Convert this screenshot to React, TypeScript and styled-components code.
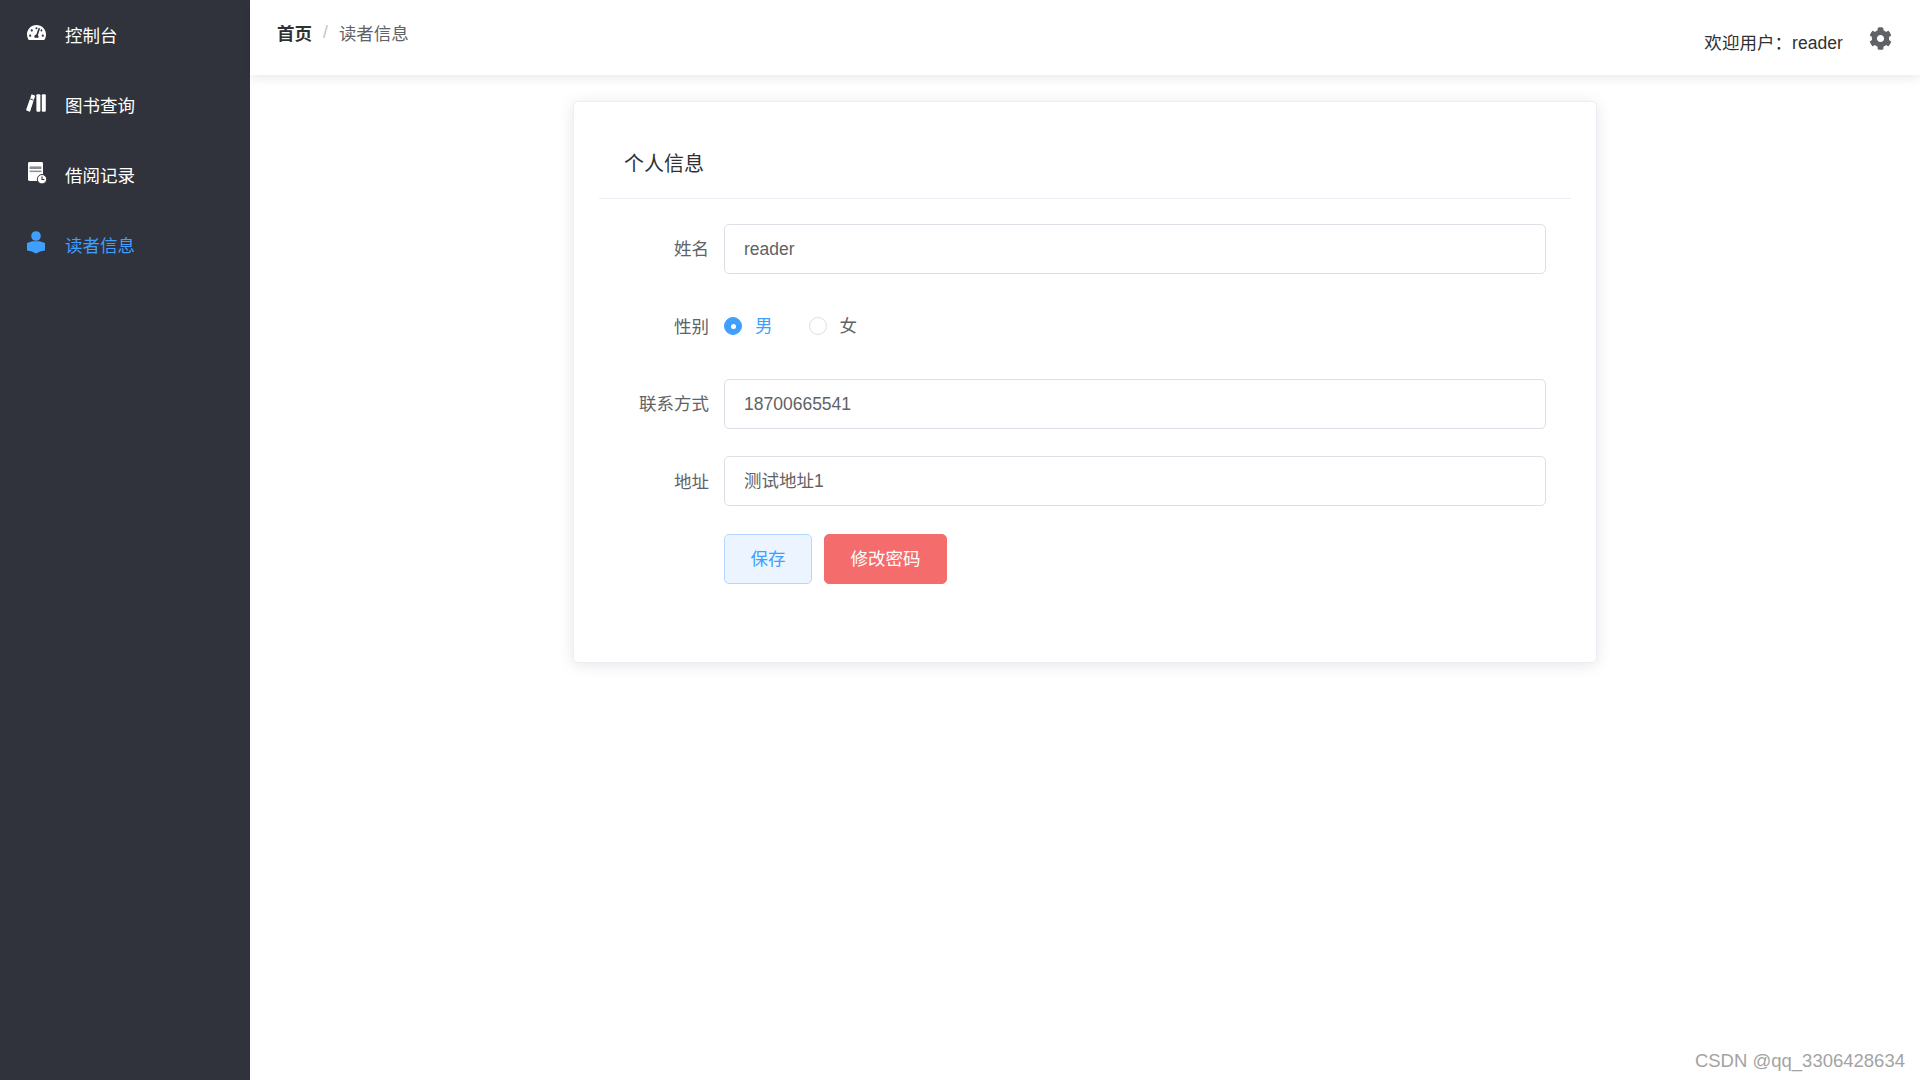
import styled, { createGlobalStyle } from "styled-components";
import { FaCog, FaTachometerAlt } from "react-icons/fa";

const GlobalStyle = createGlobalStyle`
  html, body {
    margin: 0;
    padding: 0;
    background: #fff;
    font-family: "Liberation Sans", "Noto Sans CJK SC", sans-serif;
  }
  * { box-sizing: border-box; }
`;

const Layout = styled.div`
  display: flex;
  width: 1920px;
  height: 1080px;
  overflow: hidden;
  position: relative;
`;

const Sidebar = styled.aside`
  width: 250px;
  flex-shrink: 0;
  background: #30333c;
`;

const MenuItem = styled.a<{ $active?: boolean }>`
  display: flex;
  align-items: center;
  height: 70px;
  padding-left: 25px;
  padding-bottom: 2px;
  font-size: 17.5px;
  color: ${(p) => (p.$active ? "#409eff" : "#fff")};
  text-decoration: none;
`;

const MenuIcon = styled.span`
  display: flex;
  width: 22px;
  height: 22px;
  margin-right: 18px;
  margin-top: -3px;
  align-items: center;
  justify-content: center;
  svg { display: block; }
`;

const Main = styled.div`
  flex: 1;
  display: flex;
  flex-direction: column;
  min-width: 0;
`;

const Header = styled.header`
  height: 75px;
  flex-shrink: 0;
  display: flex;
  justify-content: space-between;
  padding: 0 28px 0 27px;
  background: #fff;
  box-shadow: 0 2px 12px rgba(0, 0, 0, 0.1);
`;

const Breadcrumb = styled.nav`
  display: flex;
  align-items: center;
  height: 65px;
  font-size: 17.5px;
`;

const CrumbHome = styled.span`
  font-weight: 700;
  color: #303133;
`;

const CrumbSep = styled.span`
  margin: 0 11px;
  color: #c0c4cc;
`;

const CrumbCurrent = styled.span`
  color: #606266;
`;

const UserBox = styled.div`
  display: flex;
  align-items: center;
  font-size: 17.5px;
  color: #303133;
  height: 82px;
`;

const UserText = styled.span`
  letter-spacing: 0.05px;
`;

const Gear = styled.span`
  display: flex;
  margin-left: 26px;
  margin-top: -5px;
  color: #606266;
`;

const Content = styled.main`
  flex: 1;
  display: flex;
  justify-content: center;
  padding-top: 25.5px;
`;

const Card = styled.section`
  width: 1024px;
  height: 562px;
  padding: 0 25px;
  background: #fff;
  border: 1px solid #ebeef5;
  border-radius: 5px;
  box-shadow: 0 2px 15px rgba(0, 0, 0, 0.1);
`;

const CardHeader = styled.div`
  height: 97px;
  padding: 25px 25px 0;
  border-bottom: 1px solid #ebeef5;
`;

const CardTitle = styled.h2`
  margin: 0;
  padding-top: 25px;
  font-size: 20px;
  line-height: 25px;
  font-weight: 400;
  color: #303133;
`;

const Form = styled.form`
  display: flex;
  flex-direction: column;
  gap: 27.5px;
  padding: 25px;
`;

const FormRow = styled.div`
  display: flex;
  align-items: center;
  height: 50px;
`;

const Label = styled.label`
  width: 100px;
  padding-right: 15px;
  padding-bottom: 2px;
  text-align: right;
  font-size: 17.5px;
  color: #606266;
`;

const TextInput = styled.input<{ $cjk?: boolean }>`
  flex: 1;
  height: 50px;
  padding: ${(p) => (p.$cjk ? "0 19px 3px" : "1px 19px 0")};
  border: 1.25px solid #dcdfe6;
  border-radius: 5px;
  outline: none;
  font-family: inherit;
  font-size: 17.5px;
  color: #606266;
  background: #fff;
`;

const RadioGroup = styled.div`
  display: flex;
  gap: 36px;
`;

const RadioOption = styled.span<{ $checked?: boolean }>`
  display: flex;
  align-items: center;
  gap: 13px;
  font-size: 17.5px;
  color: ${(p) => (p.$checked ? "#409eff" : "#606266")};
`;

const RadioText = styled.span`
  padding-bottom: 3px;
`;

const RadioDot = styled.span<{ $checked?: boolean }>`
  display: flex;
  align-items: center;
  justify-content: center;
  width: 18px;
  height: 18px;
  border-radius: 50%;
  border: 1.25px solid ${(p) => (p.$checked ? "#409eff" : "#dcdfe6")};
  background: ${(p) => (p.$checked ? "#409eff" : "#fff")};
  &::after {
    content: "";
    width: 5px;
    height: 5px;
    border-radius: 50%;
    background: #fff;
  }
`;

const ButtonRow = styled.div`
  display: flex;
  gap: 12px;
  padding-left: 100px;
`;

const Button = styled.button<{ $variant: "plain" | "danger" }>`
  height: 50px;
  padding: 0 25.5px 3px;
  border-radius: 5px;
  font-family: inherit;
  font-size: 17.5px;
  border: 1.25px solid ${(p) => (p.$variant === "plain" ? "#b3d8ff" : "#f56c6c")};
  background: ${(p) => (p.$variant === "plain" ? "#ecf5ff" : "#f56c6c")};
  color: ${(p) => (p.$variant === "plain" ? "#409eff" : "#fff")};
`;

const Watermark = styled.div`
  position: absolute;
  right: 15px;
  bottom: 8px;
  font-size: 18.5px;
  color: #a3a3a3;
`;

const BooksIcon = () => (
  <svg width="20" height="18" viewBox="0 0 20 18" fill="currentColor">
    <rect x="10.4" y="0.3" width="4" height="17.4" rx="1" />
    <rect x="15.8" y="0.3" width="4" height="17.4" rx="1" />
    <path d="M5.6 0.2 9.2 1.8 4.2 17.3Q3.8 18 3 17.6L0.6 16.6Q0 16.2 0.2 15.6Z" />
    <path d="M3.6 4.6 7.6 6.2" stroke="#30333c" strokeWidth="0.9" />
  </svg>
);

const RecordIcon = () => (
  <svg width="22" height="22" viewBox="0 0 22 22">
    <path d="M3 1.4Q3 0 4.4 0H16.6Q18 0 18 1.4V19H4.4Q3 19 3 17.6Z" fill="currentColor" />
    <rect x="4.6" y="4.4" width="11.8" height="2.6" fill="#8b8d93" />
    <rect x="4.6" y="8.6" width="11.8" height="1.5" fill="#8b8d93" />
    <circle cx="17" cy="17.2" r="4.7" fill="currentColor" stroke="#30333c" strokeWidth="1" />
    <path d="M17 14.6V17.5H19.4" fill="none" stroke="#30333c" strokeWidth="1.1" />
  </svg>
);

const ReaderIcon = () => (
  <svg width="20" height="23" viewBox="0 0 20 23" fill="currentColor">
    <circle cx="10" cy="5" r="4.8" />
    <path d="M1 12 6.4 10.2H13.6L19 12V19.4Q14 19.8 10 22.6 6 19.8 1 19.4Z" />
  </svg>
);

export default function App() {
  return (
    <Layout>
      <GlobalStyle />
      <Sidebar>
        <MenuItem>
          <MenuIcon><FaTachometerAlt size={19} /></MenuIcon>
          控制台
        </MenuItem>
        <MenuItem>
          <MenuIcon><BooksIcon /></MenuIcon>
          图书查询
        </MenuItem>
        <MenuItem>
          <MenuIcon><RecordIcon /></MenuIcon>
          借阅记录
        </MenuItem>
        <MenuItem $active>
          <MenuIcon><ReaderIcon /></MenuIcon>
          读者信息
        </MenuItem>
      </Sidebar>
      <Main>
        <Header>
          <Breadcrumb>
            <CrumbHome>首页</CrumbHome>
            <CrumbSep>/</CrumbSep>
            <CrumbCurrent>读者信息</CrumbCurrent>
          </Breadcrumb>
          <UserBox>
            <UserText>欢迎用户：reader</UserText>
            <Gear><FaCog size={23} /></Gear>
          </UserBox>
        </Header>
        <Content>
          <Card>
            <CardHeader>
              <CardTitle>个人信息</CardTitle>
            </CardHeader>
            <Form>
              <FormRow>
                <Label>姓名</Label>
                <TextInput defaultValue="reader" />
              </FormRow>
              <FormRow>
                <Label>性别</Label>
                <RadioGroup>
                  <RadioOption $checked><RadioDot $checked /><RadioText>男</RadioText></RadioOption>
                  <RadioOption><RadioDot /><RadioText>女</RadioText></RadioOption>
                </RadioGroup>
              </FormRow>
              <FormRow>
                <Label>联系方式</Label>
                <TextInput defaultValue="18700665541" />
              </FormRow>
              <FormRow>
                <Label>地址</Label>
                <TextInput $cjk defaultValue="测试地址1" />
              </FormRow>
              <ButtonRow>
                <Button type="button" $variant="plain">保存</Button>
                <Button type="button" $variant="danger">修改密码</Button>
              </ButtonRow>
            </Form>
          </Card>
        </Content>
      </Main>
      <Watermark>CSDN @qq_3306428634</Watermark>
    </Layout>
  );
}
